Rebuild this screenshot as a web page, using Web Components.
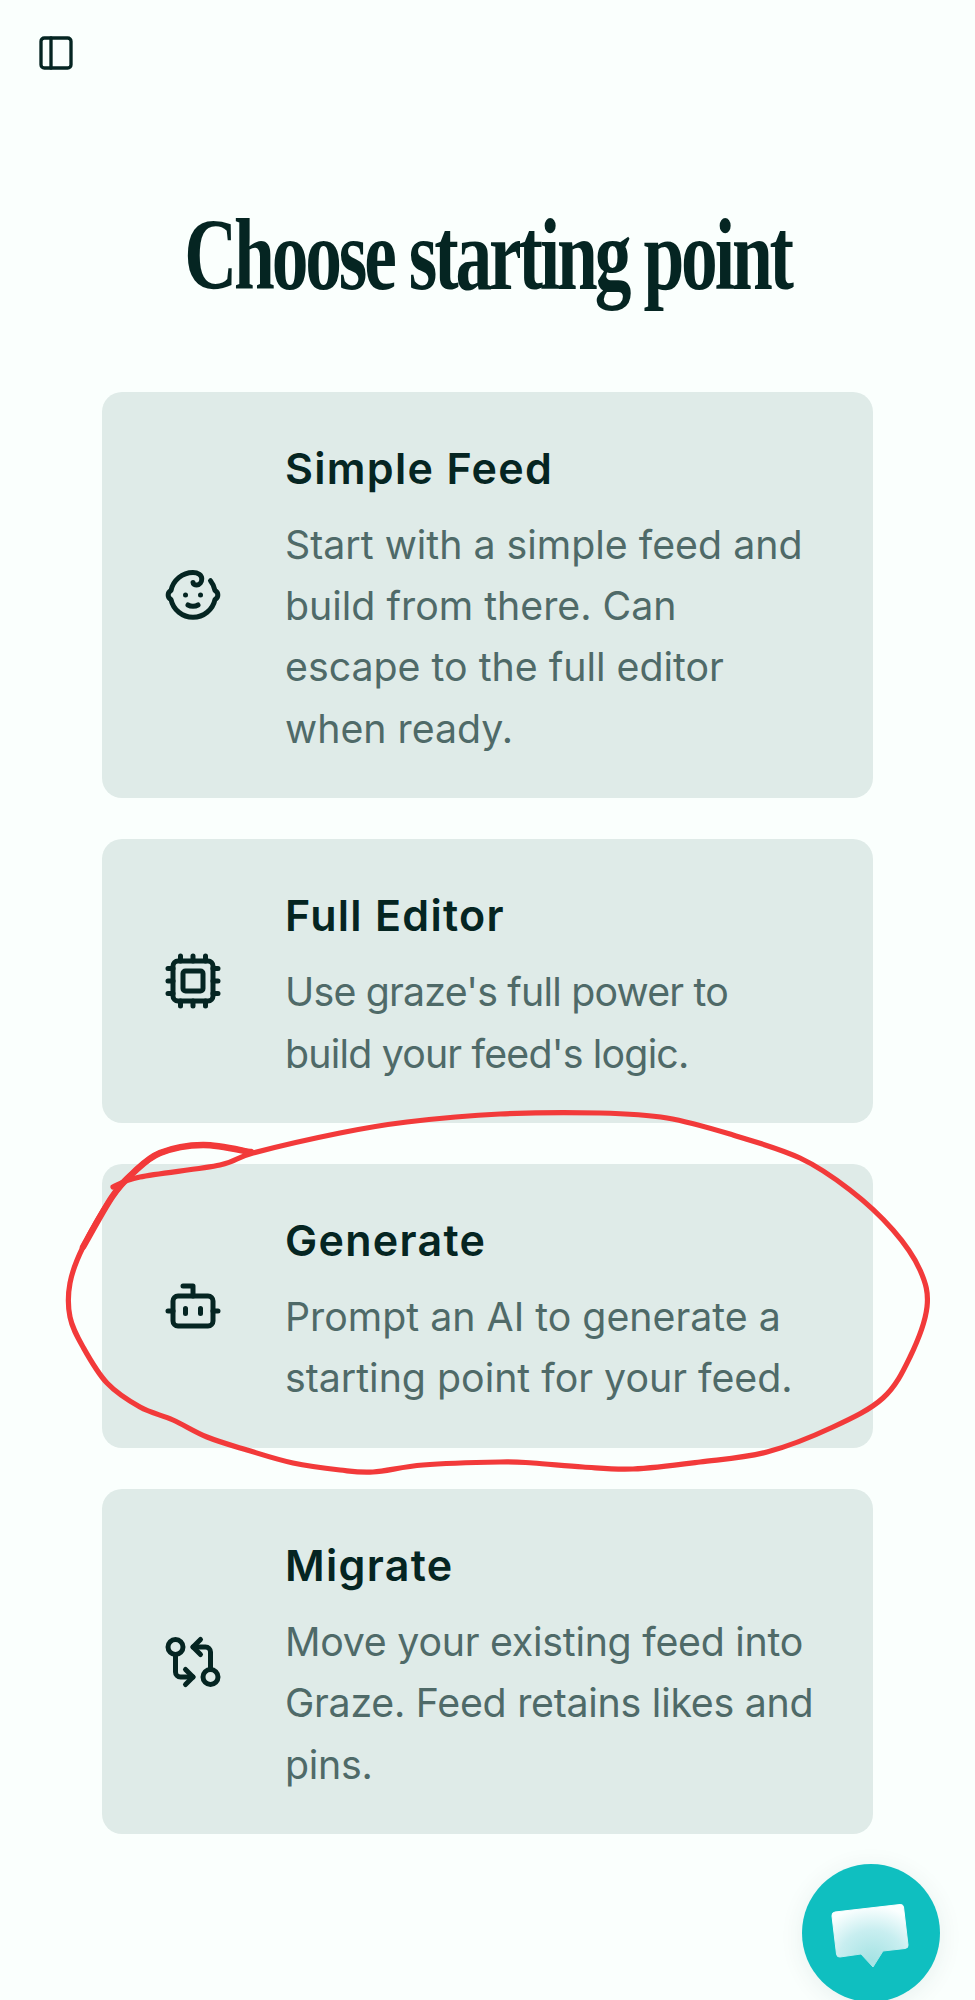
<!DOCTYPE html>
<html lang="en"><head><meta charset="utf-8"><title>Choose starting point</title>
<style>
html,body{margin:0;background:#fafffd;}
body{font-family:Inter,"Liberation Sans",sans-serif;color:#052522;width:975px;height:2000px;overflow:hidden;position:relative}
</style></head><body>
<app-page>
  <lucide-icon slot="toggle" name="panel" size="40"></lucide-icon>
  <start-card title-text="Simple Feed" icon="baby">Start with a simple feed and<br>build from there. Can<br>escape to the full editor<br>when ready.</start-card>
  <start-card title-text="Full Editor" icon="cpu" style="--desc-track:-.8px">Use graze's full power to<br>build your feed's logic.</start-card>
  <start-card title-text="Generate" icon="bot">Prompt an AI to generate a<br>starting point for your feed.</start-card>
  <start-card title-text="Migrate" icon="git" style="--desc-track:-.25px">Move your existing feed into<br>Graze. Feed retains likes and<br>pins.</start-card>
</app-page>
<scribble-mark></scribble-mark>
<chat-fab></chat-fab>
<script>
const ICONS={
panel:'<rect x="3" y="3" width="18" height="18" rx="2"/><path d="M9 3v18"/>',
baby:'<path d="M9 12h.01"/><path d="M15 12h.01"/><path d="M10 16c.5.3 1.2.5 2 .5s1.5-.2 2-.5"/><path d="M19 6.3a9 9 0 0 1 1.8 3.9 2 2 0 0 1 0 3.6 9 9 0 0 1-17.6 0 2 2 0 0 1 0-3.6A9 9 0 0 1 12 3c2 0 3.5 1.1 3.5 2.5s-.9 2.5-2 2.5c-.8 0-1.5-.4-1.5-1"/>',
cpu:'<path d="M12 20v2M12 2v2M17 20v2M17 2v2M2 12h2M2 17h2M2 7h2M20 12h2M20 17h2M20 7h2M7 20v2M7 2v2"/><rect x="4" y="4" width="16" height="16" rx="2"/><rect x="8" y="8" width="8" height="8" rx="1"/>',
bot:'<path d="M12 8V4H8"/><rect x="4" y="8" width="16" height="12" rx="2"/><path d="M2 14h2M20 14h2M15 13v2M9 13v2"/>',
git:'<circle cx="5" cy="6" r="3"/><path d="M12 6h5a2 2 0 0 1 2 2v7"/><path d="m15 9-3-3 3-3"/><circle cx="19" cy="18" r="3"/><path d="M12 18H7a2 2 0 0 1-2-2V9"/><path d="m9 15 3 3-3 3"/>'
};
class LucideIcon extends HTMLElement{
  connectedCallback(){
    const s=this.getAttribute('size')||60;
    this.attachShadow({mode:'open'}).innerHTML=`<style>:host{display:block;flex:none;width:${s}px;height:${s}px;color:#052522}svg{display:block}</style>
    <svg width="${s}" height="${s}" viewBox="0 0 24 24" fill="none" stroke="currentColor" stroke-width="2" stroke-linecap="round" stroke-linejoin="round">${ICONS[this.getAttribute('name')]}</svg>`;
  }
}
customElements.define('lucide-icon',LucideIcon);
class AppPage extends HTMLElement{
  connectedCallback(){
    this.attachShadow({mode:'open'}).innerHTML=`<style>
    :host{display:block;padding:33px 102px 0}
    .top{margin-left:-66px;height:40px}
    h1{margin:131px -102px 0;height:188px;font:700 102px/1 "Liberation Serif",serif;letter-spacing:-4.4px;text-align:center;color:#052522;white-space:nowrap;transform:scaleX(.72);transform-origin:center top;}
    .list{display:flex;flex-direction:column;gap:41px}
    </style>
    <div class="top"><slot name="toggle"></slot></div>
    <h1>Choose starting point</h1>
    <div class="list"><slot></slot></div>`;
  }
}
customElements.define('app-page',AppPage);
class StartCard extends HTMLElement{
  connectedCallback(){
    const t=this.getAttribute('title-text'),i=this.getAttribute('icon');
    this.attachShadow({mode:'open'}).innerHTML=`<style>
    :host{display:flex;align-items:center;gap:62px;padding:41px 30px 41px 61px;background:#dfebe8;border-radius:20px}
    .text{flex:1;min-width:0;padding-top:4.5px;margin-bottom:-1.5px}
    .t{font:600 43px/61px Inter,sans-serif;letter-spacing:1.3px;color:#052522;margin-bottom:15.5px;}
    .d{font:400 39.3px/61.2px Inter,sans-serif;color:#4f6a68;letter-spacing:var(--desc-track,0);white-space:nowrap}
    </style>
    <lucide-icon name="${i}" size="60"></lucide-icon>
    <div class="text"><div class="t">${t}</div><div class="d"><slot></slot></div></div>`;
  }
}
customElements.define('start-card',StartCard);
class ScribbleMark extends HTMLElement{
  connectedCallback(){
    const p=[[251,1152],[203,1145],[160,1153],[133,1173],[112,1197],[83,1247],[70,1283],[70,1317],[83,1347],[107,1383],[140,1407],[173,1420],[207,1437],[247,1450],[293,1463],[340,1470],[373,1472],[423,1465],[500,1462],[533,1463],[583,1467],[633,1469],[700,1462],[767,1452],[833,1427],[883,1398],[910,1357],[927,1307],[920,1270],[893,1230],[850,1190],[800,1158],[733,1135],[667,1118],[600,1113],[500,1114],[407,1122],[340,1133],[253,1153],[220,1165],[140,1177],[113,1187]];
    const seg=(q)=>{let d=`M${q[0]}`;
    for(let i=0;i<q.length-1;i++){
      const a=q[Math.max(i-1,0)],b=q[i],c=q[i+1],e=q[Math.min(i+2,q.length-1)];
      d+=`C${b[0]+(c[0]-a[0])/6} ${b[1]+(c[1]-a[1])/6} ${c[0]-(e[0]-b[0])/6} ${c[1]-(e[1]-b[1])/6} ${c[0]} ${c[1]}`;
    } return d;};
    this.attachShadow({mode:'open'}).innerHTML=`<style>:host{position:absolute;left:0;top:0;width:975px;height:2000px;pointer-events:none}svg{display:block}</style>
    <svg width="975" height="2000" fill="none" stroke="#f23a3a" stroke-linecap="round" stroke-linejoin="round"><path d="${seg(p)}" stroke-width="5.2"/><path d="${seg(p.slice(0,6))}" stroke-width="6.4"/></svg>`;
  }
}
customElements.define('scribble-mark',ScribbleMark);
class ChatFab extends HTMLElement{
  connectedCallback(){
    this.attachShadow({mode:'open'}).innerHTML=`<style>:host{position:absolute;left:802px;top:1864px;width:138px;height:138px;border-radius:50%;background:#0fbfc0;box-shadow:0 4px 24px rgba(0,60,60,.08)}svg{display:block}</style>
    <svg width="138" height="138" viewBox="802 1864 138 138">
      <defs><radialGradient id="g" gradientUnits="userSpaceOnUse" cx="872" cy="1960" r="60" gradientTransform="translate(872 1960) scale(1 .9) translate(-872 -1960)">
        <stop offset="0" stop-color="#a5e3e4"/><stop offset=".55" stop-color="#c8eef0"/><stop offset="1" stop-color="#fbffff"/></radialGradient></defs>
      <path d="M835 1912 L900 1904.500 Q903 1904 903.500 1907 L908 1945 Q908.500 1948 905 1948.500 L883 1951 L873 1967 L861 1954 L840 1957 Q837 1957.500 836.500 1954 L832 1916 Q831.500 1912.500 835 1912Z" fill="url(#g)" stroke="url(#g)" stroke-width="1" stroke-linejoin="round"/>
    </svg>`;
  }
}
customElements.define('chat-fab',ChatFab);
</script>
</body></html>
